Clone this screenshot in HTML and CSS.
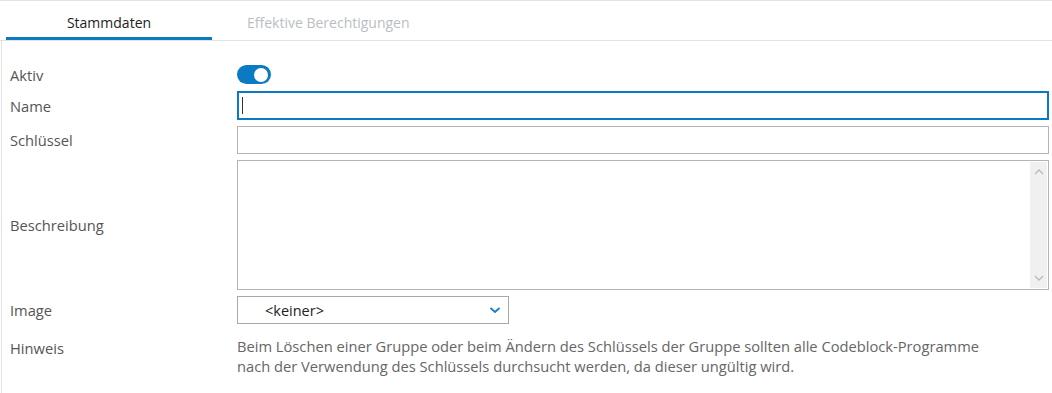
FILE: index.html
```html
<!DOCTYPE html>
<html lang="de">
<head>
    <meta charset="UTF-8">
    <title>Gruppe</title>
    <link rel="stylesheet" href="styles.css">
</head>
<body>
    <div class="panel">
        <!-- Reiter -->
        <div class="tabs">
            <div class="tab active">Stammdaten</div>
            <div class="tab">Effektive Berechtigungen</div>
        </div>

        <div class="form">
            <label class="lbl">Aktiv</label>
            <div class="field toggle-field">
                <span class="toggle on"><span class="knob"></span></span>
            </div>

            <label class="lbl">Name</label>
            <div class="field">
                <div class="input focus"><span class="caret"></span></div>
            </div>

            <label class="lbl">Schlüssel</label>
            <div class="field">
                <div class="input"></div>
            </div>

            <label class="lbl">Beschreibung</label>
            <div class="field">
                <div class="textarea">
                    <div class="scroll">
                        <svg width="10" height="8" viewBox="0 0 10 8"><path d="M1 6 L5 2 L9 6" fill="none" stroke="#b8b8b8" stroke-width="1.3"/></svg>
                        <svg width="10" height="8" viewBox="0 0 10 8"><path d="M1 2 L5 6 L9 2" fill="none" stroke="#b8b8b8" stroke-width="1.3"/></svg>
                    </div>
                </div>
            </div>

            <label class="lbl">Image</label>
            <div class="field">
                <div class="select">
                    <span>&lt;keiner&gt;</span>
                    <svg width="12" height="8" viewBox="0 0 12 8"><path d="M1.5 2 L6 6 L10.5 2" fill="none" stroke="#1a7fc4" stroke-width="1.8"/></svg>
                </div>
            </div>

            <label class="lbl hint-lbl">Hinweis</label>
            <div class="field">
                <p class="hint">Beim Löschen einer Gruppe oder beim Ändern des Schlüssels der Gruppe sollten alle Codeblock-Programme<br>nach der Verwendung des Schlüssels durchsucht werden, da dieser ungültig wird.</p>
            </div>
        </div>
    </div>
</body>
</html>
```

FILE: styles.css
```css
/* Grundlayout */
body {
    margin: 0;
    background: #fff;
    font-family: "Open Sans", "Noto Sans", sans-serif;
    font-size: 14.7px;
    color: #555;
}

.panel {
    border-top: 1px solid #e3e3e3;
    height: 392px;
    display: flex;
    flex-direction: column;
}

/* Reiter */
.tabs {
    display: flex;
    padding-left: 6px;
    height: 39px;
    flex-shrink: 0;
    border-bottom: 1px solid #e3e3e3;
    font-size: 14px;
}

.tab {
    padding: 12px 35px 0;
    box-sizing: border-box;
    color: #b9bec4;
}

.tab.active {
    width: 206px;
    padding: 12px 0 0;
    text-align: center;
    color: #222;
    border-bottom: 3px solid #0a7bc2;
}

/* Formular */
.form {
    flex: 1;
    display: grid;
    grid-template-columns: 227px 812px;
    align-content: start;
    row-gap: 6px;
    padding: 24px 0 0 8px;
    margin-left: 1px;
    border-left: 1px solid #e3e3e3;
    box-sizing: border-box;
    align-items: center;
}

.lbl {
    color: #555;
}

.field {
    display: flex;
    align-items: center;
}

.toggle-field {
    height: 20px;
    align-items: flex-start;
}

.toggle {
    width: 34px;
    height: 19px;
    border-radius: 10px;
    background: #0a7bc2;
    display: flex;
    justify-content: flex-end;
    align-items: center;
    padding: 0 3px;
    box-sizing: border-box;
}

.knob {
    width: 14px;
    height: 14px;
    border-radius: 50%;
    background: #fff;
}

.input {
    width: 100%;
    height: 28px;
    border: 1px solid #b4b4b4;
    box-sizing: border-box;
    display: flex;
    align-items: center;
}

.input.focus {
    border: 2px solid #0a7bc2;
    height: 29px;
}

.caret {
    width: 1px;
    height: 17px;
    margin-left: 3px;
    background: #333;
}

.textarea {
    width: 100%;
    height: 130px;
    border: 1px solid #b4b4b4;
    box-sizing: border-box;
    display: flex;
    justify-content: flex-end;
    padding: 1px;
}

.scroll {
    width: 17px;
    background: #f0f0f0;
    display: flex;
    flex-direction: column;
    justify-content: space-between;
    align-items: center;
    padding: 6px 0;
}

.select {
    width: 272px;
    height: 28px;
    border: 1px solid #a8a8a8;
    box-sizing: border-box;
    display: flex;
    align-items: center;
    justify-content: space-between;
    padding: 0 7px 0 27px;
    color: #222;
    font-size: 14.5px;
}

.hint-lbl {
    align-self: start;
    line-height: 20px;
    padding-top: 8px;
}

.hint {
    margin: 6px 0 0;
    line-height: 20px;
    color: #666;
}
```
